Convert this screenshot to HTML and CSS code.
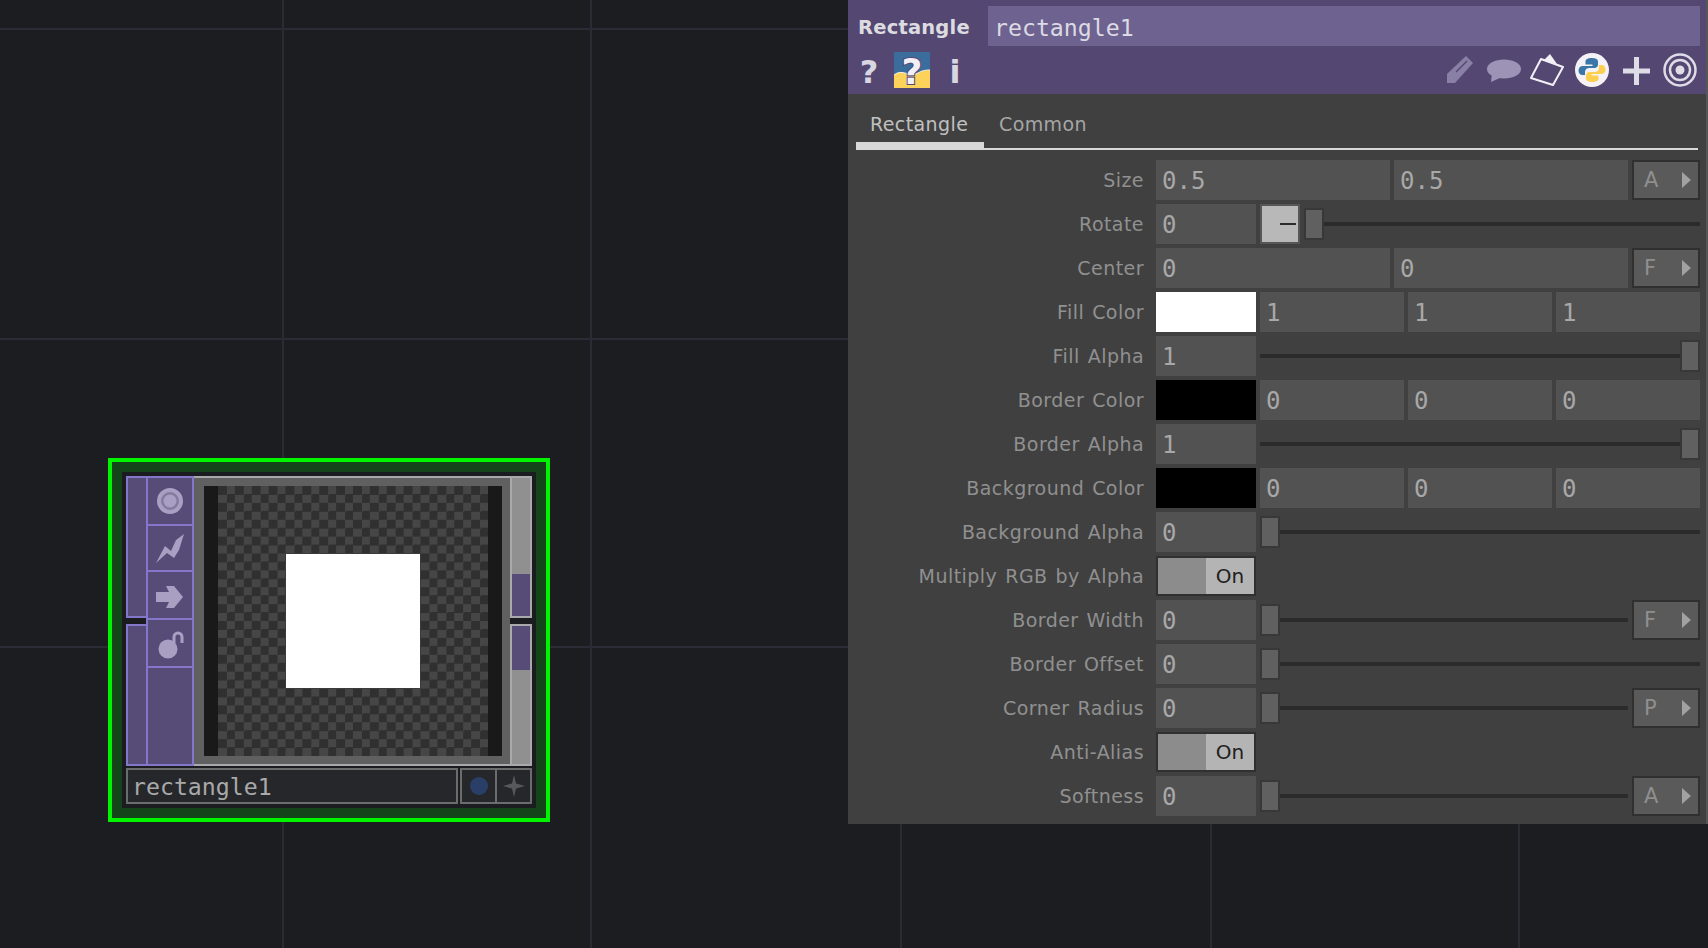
FILE: index.html
```html
<!DOCTYPE html>
<html lang="en">

<head>
  <title>Rectangle TOP</title>
  <meta charset="UTF-8">
  <link rel="stylesheet" href="styles.css">
</head>

<body>

  <div class="canvas">

    <!-- the operator node -->
    <div class="node">
      <div class="node-inner">
        <div class="node-top">
          <div class="ports ports-left">
            <div class="port"></div>
            <div class="port"></div>
          </div>
          <div class="flags">
            <div class="flag flag-a">
              <svg width="44" height="46" viewBox="0 0 44 46"><circle cx="22" cy="23" r="11" fill="#85799f" stroke="#a89fc2" stroke-width="4"/><circle cx="22" cy="23" r="6.500" fill="#a89fc2"/></svg>
            </div>
            <div class="flag flag-b">
              <svg width="44" height="44" viewBox="0 0 44 44"><polygon points="8,37 17,20 23,25 28,14 36,8 31,24 26,32 19,27" fill="#a89fc2"/></svg>
            </div>
            <div class="flag flag-a">
              <svg width="44" height="46" viewBox="0 0 44 46"><polygon points="8,20 21,20 18,14 26,14 35,25 26,36 18,36 21,30 8,30" fill="#a89fc2"/></svg>
            </div>
            <div class="flag flag-a">
              <svg width="44" height="46" viewBox="0 0 44 46"><circle cx="20" cy="29" r="9.500" fill="#a89fc2"/><path d="M26 23V17a4 4 0 0 1 8 0v6" fill="none" stroke="#a89fc2" stroke-width="3"/></svg>
            </div>
            <div class="flag flag-rest"></div>
          </div>
          <div class="viewer">
            <div class="viewer-side"></div>
            <div class="checker">
              <div class="rect-out"></div>
            </div>
            <div class="viewer-side"></div>
          </div>
          <div class="ports ports-right">
            <div class="port"><div class="port-fill fill-top"></div></div>
            <div class="port"><div class="port-fill fill-bottom"></div></div>
          </div>
        </div>
        <div class="node-bottom">
          <div class="node-name">rectangle1</div>
          <div class="node-btns">
            <div class="node-btn node-btn-line"><span class="blue-dot"></span></div>
            <div class="node-btn">
              <svg width="24" height="24" viewBox="0 0 24 24"><polygon points="12,1 14,9.500 23,12 14,14.500 12,23 10,14.500 1,12 10,9.500" fill="#58595b"/></svg>
            </div>
          </div>
        </div>
      </div>
    </div>

    <!-- parameter window -->
    <div class="panel">
      <div class="panel-head">
        <div class="title-row">
          <div class="op-type">Rectangle</div>
          <div class="op-name">rectangle1</div>
        </div>
        <div class="icon-row">
          <div class="icon-group group-left">
            <div class="icon-char">?</div>
            <svg class="help-icon" width="36" height="36" viewBox="0 0 36 36">
              <rect width="36" height="36" fill="#3a6c9c"/>
              <path d="M0 23C8 16 16 26 24 21 29 18 33 18 36 18V36H0Z" fill="#fdd25a"/>
              <path d="M0 23C8 16 16 26 24 21 29 18 33 18 36 18" fill="none" stroke="#f4f0e0" stroke-width="1"/>
              <text class="help-mark" x="18" y="32">?</text>
            </svg>
            <div class="icon-char">i</div>
          </div>
          <div class="icon-group">
            <svg width="36" height="36" viewBox="0 0 36 36"><polygon points="5,22 24,4 31,11 13,31 5,31" fill="#8a80a6"/><line x1="14" y1="20" x2="25" y2="9" stroke="#544873" stroke-width="1.500"/></svg>
            <svg width="36" height="36" viewBox="0 0 36 36"><ellipse cx="18" cy="17" rx="17" ry="9.500" fill="#9c93b6"/><polygon points="6,21 5,30 16,25" fill="#9c93b6"/></svg>
            <svg width="36" height="36" viewBox="0 0 36 36"><polygon points="1,26 11,7 33,15 23,33" fill="none" stroke="#f2f0f6" stroke-width="2" stroke-linejoin="round"/><polygon points="14,8 20,2 27,12" fill="#f2f0f6"/></svg>
            <svg width="36" height="36" viewBox="0 0 36 36">
              <circle cx="18" cy="18" r="17" fill="#f4f2f6"/>
              <path d="M18 6c-4.500 0-6.500 1.500-6.500 3.500v3h7v1.500H9c-3 0-4.500 2-4.500 4.500s1.500 4.500 4 4.500h2.500V20c0-2.500 2-4 4.500-4h5c2 0 3.500-1.500 3.500-3.500v-3C24 7.500 22 6 18 6z" fill="#3a77a8"/>
              <path d="M18 6c-4.500 0-6.500 1.500-6.500 3.500v3h7v1.500H9c-3 0-4.500 2-4.500 4.500s1.500 4.500 4 4.500h2.500V20c0-2.500 2-4 4.500-4h5c2 0 3.500-1.500 3.500-3.500v-3C24 7.500 22 6 18 6z" fill="#fcd04e" transform="rotate(180 18 18)"/>
            </svg>
            <svg width="36" height="36" viewBox="0 0 36 36"><path d="M5 19H32M18.500 5V33" stroke="#dedce6" stroke-width="5"/></svg>
            <svg width="36" height="36" viewBox="0 0 36 36"><circle cx="18" cy="18" r="15.500" fill="none" stroke="#dedce6" stroke-width="2.500"/><circle cx="18" cy="18" r="10" fill="none" stroke="#dedce6" stroke-width="2.500"/><circle cx="18" cy="18" r="4.500" fill="#dedce6"/></svg>
          </div>
        </div>
      </div>

      <div class="tabs">
        <div class="tab active">Rectangle</div>
        <div class="tab">Common</div>
      </div>

      <div class="params">
        <div class="row">
          <div class="label">Size</div>
          <div class="field grow">0.5</div>
          <div class="field grow">0.5</div>
          <div class="mode-btn"><span>A</span><i class="arrow"></i></div>
        </div>
        <div class="row">
          <div class="label">Rotate</div>
          <div class="field short">0</div>
          <div class="minus-btn"><span class="minus"></span></div>
          <div class="slider"><div class="handle"></div><div class="track"></div></div>
        </div>
        <div class="row">
          <div class="label">Center</div>
          <div class="field grow">0</div>
          <div class="field grow">0</div>
          <div class="mode-btn"><span>F</span><i class="arrow"></i></div>
        </div>
        <div class="row">
          <div class="label">Fill Color</div>
          <div class="swatch white"></div>
          <div class="field grow">1</div>
          <div class="field grow">1</div>
          <div class="field grow">1</div>
        </div>
        <div class="row">
          <div class="label">Fill Alpha</div>
          <div class="field short">1</div>
          <div class="slider"><div class="track"></div><div class="handle"></div></div>
        </div>
        <div class="row">
          <div class="label">Border Color</div>
          <div class="swatch black"></div>
          <div class="field grow">0</div>
          <div class="field grow">0</div>
          <div class="field grow">0</div>
        </div>
        <div class="row">
          <div class="label">Border Alpha</div>
          <div class="field short">1</div>
          <div class="slider"><div class="track"></div><div class="handle"></div></div>
        </div>
        <div class="row">
          <div class="label">Background Color</div>
          <div class="swatch black"></div>
          <div class="field grow">0</div>
          <div class="field grow">0</div>
          <div class="field grow">0</div>
        </div>
        <div class="row">
          <div class="label">Background Alpha</div>
          <div class="field short">0</div>
          <div class="slider"><div class="handle"></div><div class="track"></div></div>
        </div>
        <div class="row">
          <div class="label">Multiply RGB by Alpha</div>
          <div class="toggle"><div class="toggle-off"></div><div class="toggle-on">On</div></div>
        </div>
        <div class="row">
          <div class="label">Border Width</div>
          <div class="field short">0</div>
          <div class="slider"><div class="handle"></div><div class="track"></div></div>
          <div class="mode-btn"><span>F</span><i class="arrow"></i></div>
        </div>
        <div class="row">
          <div class="label">Border Offset</div>
          <div class="field short">0</div>
          <div class="slider"><div class="handle"></div><div class="track"></div></div>
        </div>
        <div class="row">
          <div class="label">Corner Radius</div>
          <div class="field short">0</div>
          <div class="slider"><div class="handle"></div><div class="track"></div></div>
          <div class="mode-btn"><span>P</span><i class="arrow"></i></div>
        </div>
        <div class="row">
          <div class="label">Anti-Alias</div>
          <div class="toggle"><div class="toggle-off"></div><div class="toggle-on">On</div></div>
        </div>
        <div class="row">
          <div class="label">Softness</div>
          <div class="field short">0</div>
          <div class="slider"><div class="handle"></div><div class="track"></div></div>
          <div class="mode-btn"><span>A</span><i class="arrow"></i></div>
        </div>
      </div>
    </div>
  </div>

</body>

</html>
```

FILE: styles.css
```css
* {
  box-sizing: border-box;
}

html,
body {
  margin: 0;
  height: 100%;
  overflow: hidden;
}

body {
  font-family: "DejaVu Sans", sans-serif;
  background: #1b1d21;
}

/* network background, grid lines are not evenly snapped so each one is listed */
.canvas {
  position: relative;
  width: 1708px;
  height: 948px;
  background-color: #1b1d21;
  background-repeat: no-repeat;
  background-image:
    linear-gradient(#2a2b35, #2a2b35),
    linear-gradient(#2a2b35, #2a2b35),
    linear-gradient(#2a2b35, #2a2b35),
    linear-gradient(#2a2b35, #2a2b35),
    linear-gradient(#2a2b35, #2a2b35),
    linear-gradient(#2a2b35, #2a2b35),
    linear-gradient(#2a2b35, #2a2b35),
    linear-gradient(#2a2b35, #2a2b35);
  background-size:
    100% 2px, 100% 2px, 100% 2px,
    2px 100%, 2px 100%, 2px 100%, 2px 100%, 2px 100%;
  background-position:
    0 28px, 0 338px, 0 646px,
    282px 0, 590px 0, 900px 0, 1210px 0, 1518px 0;
}

/* node */
.node {
  position: absolute;
  left: 108px;
  top: 458px;
  width: 442px;
  height: 364px;
  border: 4px solid #00f400;
  background: #14451a;
  padding: 10px;
}

.node-inner {
  height: 100%;
  padding: 4px;
  background: #1a1c20;
  display: flex;
  flex-direction: column;
  gap: 2px;
}

.node-top {
  height: 290px;
  display: flex;
}

.ports {
  display: flex;
  flex-direction: column;
  gap: 6px;
  height: 100%;
}

.port {
  flex: 1;
}

.ports-left {
  width: 20px;
}

.ports-left .port {
  background: #574b78;
  border: 2px solid #8476c8;
  border-right: none;
}

.ports-right {
  width: 22px;
}

.ports-right .port {
  background: #909090;
  border: 2px solid #a9a9ab;
  position: relative;
}

.port-fill {
  position: absolute;
  left: 0;
  right: 0;
  background: #574b78;
}

.fill-top {
  bottom: 0;
  height: 42px;
}

.fill-bottom {
  top: 0;
  height: 44px;
}

.flags {
  width: 48px;
  background: #574b78;
  border: 2px solid #8476c8;
  border-top: none;
  display: flex;
  flex-direction: column;
}

.flag {
  border-top: 2px solid #8476c8;
  display: flex;
}

.flag-a {
  height: 48px;
}

.flag-b {
  height: 46px;
}

.flag-rest {
  flex: 1;
}

.viewer {
  flex: 1;
  background: #606060;
  border-top: 2px solid #a9a9ab;
  border-bottom: 2px solid #a9a9ab;
  padding: 8px 8px 8px 10px;
  display: flex;
}

.viewer-side {
  width: 14px;
  background: #191919;
}

.checker {
  width: 270px;
  height: 270px;
  background-color: #303030;
  background-image: conic-gradient(#464646 25%, #303030 0 50%, #464646 0 75%, #303030 0);
  background-size: 16.875px 16.875px;
  display: flex;
  align-items: center;
  justify-content: center;
}

.rect-out {
  width: 134px;
  height: 134px;
  background: #fff;
}

.node-bottom {
  height: 36px;
  display: flex;
  gap: 2px;
}

.node-name {
  width: 332px;
  border: 2px solid #6c6c6c;
  background: #25272a;
  color: #a9a9a9;
  font-family: "DejaVu Sans Mono", monospace;
  font-size: 23.2px;
  line-height: 34px;
  padding-left: 4px;
}

.node-btns {
  flex: 1;
  display: flex;
  border: 2px solid #6c6c6c;
  background: #25272a;
}

.node-btn {
  flex: 1;
  display: flex;
  align-items: center;
  justify-content: center;
}

.node-btn-line {
  border-right: 2px solid #6c6c6c;
}

.blue-dot {
  width: 18px;
  height: 18px;
  border-radius: 50%;
  background: #2a3f68;
}

/* parameter panel */
.panel {
  position: absolute;
  top: 0;
  right: 0;
  width: 860px;
  height: 824px;
  background: #404040;
  border-right: 2px solid #565656;
}

.panel-head {
  height: 94px;
  background: #544873;
  padding: 6px 6px 0 0;
}

.title-row {
  display: flex;
  height: 40px;
  align-items: center;
}

.op-type {
  width: 140px;
  padding: 2px 0 0 10px;
  font-weight: bold;
  font-size: 19.5px;
  letter-spacing: 0.2px;
  color: #dcdce0;
}

.op-name {
  flex: 1;
  height: 40px;
  line-height: 43px;
  background: #6e6290;
  color: #dcdae4;
  font-family: "DejaVu Sans Mono", monospace;
  font-size: 23.2px;
  padding-left: 6px;
}

.icon-row {
  display: flex;
  justify-content: space-between;
  height: 36px;
  margin-top: 6px;
  padding: 0 2px 0 3px;
}

.icon-group {
  display: flex;
  gap: 8px;
}

.group-left {
  gap: 7px;
}

.icon-char {
  width: 36px;
  height: 36px;
  line-height: 40px;
  text-align: center;
  color: #d8d6e0;
  font-size: 32px;
  font-weight: bold;
}

.help-icon {
  overflow: visible;
}

.help-mark {
  fill: #f2f0f6;
  stroke: #544873;
  stroke-width: 2px;
  paint-order: stroke;
  font-size: 36px;
  font-weight: bold;
  font-family: "DejaVu Sans", sans-serif;
  text-anchor: middle;
}

.tabs {
  display: flex;
  height: 56px;
  margin: 0 8px;
  border-bottom: 2px solid #d8d8d8;
}

.tab {
  height: 54px;
  padding: 15px 0 0 15px;
  font-size: 19px;
  line-height: 30px;
  letter-spacing: 0.4px;
  color: #a6a6a6;
}

.tab.active {
  width: 128px;
  padding-left: 14px;
  color: #c0c0c0;
  border-bottom: 6px solid #d8d8d8;
}

.params {
  padding: 10px 6px 0 0;
  display: flex;
  flex-direction: column;
  gap: 4px;
}

.row {
  display: flex;
  gap: 4px;
  height: 40px;
}

.label {
  width: 304px;
  padding-right: 8px;
  text-align: right;
  font-size: 19px;
  line-height: 41px;
  letter-spacing: 0.45px;
  word-spacing: 1.5px;
  color: #909090;
  white-space: nowrap;
}

.field {
  background: #525252;
  color: #a8a8a8;
  font-family: "DejaVu Sans Mono", monospace;
  font-size: 24px;
  line-height: 43px;
  padding-left: 6px;
}

.grow {
  flex: 1;
}

.short,
.swatch,
.toggle {
  width: 100px;
}

.white {
  background: #fff;
}

.black {
  background: #000;
}

.mode-btn {
  width: 68px;
  border: 2px solid #303030;
  background: #5a5a5a;
  color: #8f8f8f;
  display: flex;
  align-items: center;
  justify-content: space-between;
  padding: 0 7px 0 10px;
  font-size: 21px;
}

.arrow {
  width: 0;
  height: 0;
  border-left: 9px solid #a2a2a2;
  border-top: 8px solid transparent;
  border-bottom: 8px solid transparent;
}

.minus-btn {
  width: 40px;
  border: 2px solid #565656;
  background: #b8b8b8;
  display: flex;
  align-items: center;
  justify-content: flex-end;
  padding-right: 2px;
}

.minus {
  width: 16px;
  height: 2px;
  background: #2a2a2a;
}

.slider {
  flex: 1;
  display: flex;
  align-items: center;
}

.track {
  flex: 1;
  height: 4px;
  background: #2b2b2b;
}

.handle {
  width: 20px;
  height: 32px;
  border: 2px solid #383838;
  background: #606060;
}

.toggle {
  display: flex;
  border: 2px solid #303030;
}

.toggle-off {
  flex: 1;
  background: #8c8c8c;
}

.toggle-on {
  flex: 1;
  background: #b4b4b4;
  color: #202020;
  text-align: center;
  font-size: 20px;
  line-height: 36px;
}
```
